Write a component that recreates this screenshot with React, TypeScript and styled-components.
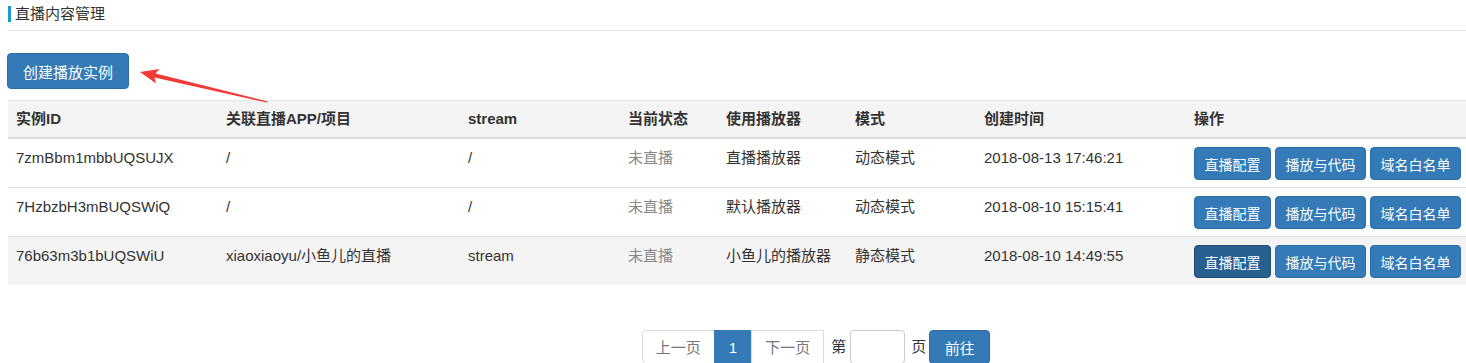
import React from 'react';
import styled, { createGlobalStyle } from 'styled-components';

const GlobalStyle = createGlobalStyle`
  html, body {
    margin: 0;
    padding: 0;
    overflow: hidden;
    background: #fff;
  }
  body {
    font-family: 'Liberation Sans', 'Noto Sans CJK SC', Arial, sans-serif;
    color: #333;
  }
`;

const palette = {
  primary: '#337ab7',
  primaryBorder: '#2e6da4',
  primaryDark: '#286090',
  primaryDarkBorder: '#204d74',
  text: '#333',
  muted: '#888',
  line: '#ddd',
  stripe: '#f4f4f4',
};

const PageDiv = styled.div`
  position: relative;
  width: 1466px;
`;

const ContentDiv = styled.div`
  padding-left: 8px;
`;

const TitleBar = styled.div`
  height: 25px;
  padding-top: 5px;
  margin-left: -1px;
  border-bottom: 1px solid #e8e8e8;
`;

const TitleText = styled.span`
  display: inline-block;
  margin-left: 1px;
  padding-left: 4px;
  border-left: 3px solid #1a9bd7;
  font-size: 15px;
  line-height: 16px;
`;

const CreateButton = styled.button`
  display: block;
  height: 36px;
  margin: 22px 0 11px -1px;
  padding: 0 15px;
  font-family: inherit;
  font-size: 15px;
  color: #fff;
  background: ${palette.primary};
  border: 1px solid ${palette.primaryBorder};
  border-radius: 4px;
  cursor: pointer;
`;

const Table = styled.table`
  width: 1458px;
  table-layout: fixed;
  border-collapse: collapse;
  font-size: 15px;
`;

const HeadRow = styled.tr`
  background: ${palette.stripe};
  border-top: 1px solid #e6e6e6;
  border-bottom: 2px solid ${palette.line};
`;

const Th = styled.th`
  padding: 7px 8px 7px;
  line-height: 22px;
  text-align: left;
  font-weight: bold;
  color: ${palette.text};
`;

const Row = styled.tr<{ hovered?: boolean }>`
  background: ${(props) => (props.hovered ? palette.stripe : '#fff')};
  border-top: 1px solid ${palette.line};
  &:first-child {
    border-top: none;
  }
`;

const Td = styled.td<{ muted?: boolean }>`
  padding: 8px 8px 7px;
  line-height: 22px;
  vertical-align: top;
  color: ${(props) => (props.muted ? palette.muted : palette.text)};
  white-space: nowrap;
`;

const ActionGroup = styled.div`
  display: flex;
  gap: 4px;
`;

const ActionButton = styled.button<{ active?: boolean }>`
  height: 33px;
  padding: 0 9.5px;
  font-family: inherit;
  font-size: 14px;
  color: #fff;
  background: ${(props) => (props.active ? palette.primaryDark : palette.primary)};
  border: 1px solid ${(props) => (props.active ? palette.primaryDarkBorder : palette.primaryBorder)};
  border-radius: 4px;
  cursor: pointer;
`;

const PagerRow = styled.div`
  display: grid;
  grid-template-columns: 1fr auto 1fr;
  align-items: start;
  margin-top: 45px;
`;

const PagerList = styled.ul`
  display: flex;
  margin: 0;
  padding: 0;
  list-style: none;
  grid-column: 2;
`;

const PageItem = styled.li<{ active?: boolean; first?: boolean }>`
  height: 34px;
  padding: 0 13px;
  line-height: 34px;
  font-size: 15px;
  color: ${(props) => (props.active ? '#fff' : '#777')};
  background: ${(props) => (props.active ? palette.primary : '#fff')};
  border: 1px solid ${(props) => (props.active ? palette.primary : palette.line)};
  margin-left: ${(props) => (props.first ? '0' : '-1px')};
  border-radius: ${(props) => (props.first ? '4px 0 0 4px' : '0')};
  box-sizing: border-box;
  cursor: pointer;
`;

const NumberItem = styled(PageItem)`
  padding: 0 14px;
`;

const JumpDiv = styled.div`
  display: flex;
  align-items: flex-start;
  grid-column: 3;
  font-size: 15px;
`;

const JumpLabel = styled.span`
  line-height: 34px;
  margin: 0 4px 0 7px;
`;

const PageLabel = styled.span`
  line-height: 34px;
  margin: 0 3px 0 6px;
`;

const PageInput = styled.input`
  width: 55px;
  height: 34px;
  box-sizing: border-box;
  border: 1px solid #ccc;
  border-radius: 4px;
  padding: 0 6px;
`;

const GoButton = styled.button`
  height: 34px;
  padding: 0 14.5px;
  font-family: inherit;
  font-size: 15px;
  color: #fff;
  background: ${palette.primary};
  border: 1px solid ${palette.primaryBorder};
  border-radius: 4px;
  cursor: pointer;
`;

const ArrowSvg = styled.svg`
  position: absolute;
  left: 0;
  top: 0;
  pointer-events: none;
`;

interface IInstance {
  id: string;
  app: string;
  stream: string;
  status: string;
  player: string;
  mode: string;
  createdAt: string;
}

const instances: IInstance[] = [
  { id: '7zmBbm1mbbUQSUJX', app: '/', stream: '/', status: '未直播', player: '直播播放器', mode: '动态模式', createdAt: '2018-08-13 17:46:21' },
  { id: '7HzbzbH3mBUQSWiQ', app: '/', stream: '/', status: '未直播', player: '默认播放器', mode: '动态模式', createdAt: '2018-08-10 15:15:41' },
  { id: '76b63m3b1bUQSWiU', app: 'xiaoxiaoyu/小鱼儿的直播', stream: 'stream', status: '未直播', player: '小鱼儿的播放器', mode: '静态模式', createdAt: '2018-08-10 14:49:55' },
];

const columns = [
  { title: '实例ID', width: 210 },
  { title: '关联直播APP/项目', width: 242 },
  { title: 'stream', width: 160 },
  { title: '当前状态', width: 98 },
  { title: '使用播放器', width: 129 },
  { title: '模式', width: 129 },
  { title: '创建时间', width: 210 },
  { title: '操作', width: 280 },
];

const App = () => {
  return (
    <PageDiv>
      <GlobalStyle />
      <ContentDiv>
        <TitleBar>
          <TitleText>直播内容管理</TitleText>
        </TitleBar>
        <CreateButton>创建播放实例</CreateButton>
        <Table>
          <colgroup>
            {columns.map((column) => (
              <col key={column.title} style={{ width: column.width }} />
            ))}
          </colgroup>
          <thead>
            <HeadRow>
              {columns.map((column) => (
                <Th key={column.title}>{column.title}</Th>
              ))}
            </HeadRow>
          </thead>
          <tbody>
            {instances.map((item, index) => (
              <Row key={item.id} hovered={index === 2}>
                <Td>{item.id}</Td>
                <Td>{item.app}</Td>
                <Td>{item.stream}</Td>
                <Td muted>{item.status}</Td>
                <Td>{item.player}</Td>
                <Td>{item.mode}</Td>
                <Td>{item.createdAt}</Td>
                <Td>
                  <ActionGroup>
                    <ActionButton active={index === 2}>直播配置</ActionButton>
                    <ActionButton>播放与代码</ActionButton>
                    <ActionButton>域名白名单</ActionButton>
                  </ActionGroup>
                </Td>
              </Row>
            ))}
          </tbody>
        </Table>
      </ContentDiv>

      <PagerRow>
        <PagerList>
          <PageItem first>上一页</PageItem>
          <NumberItem active>1</NumberItem>
          <PageItem>下一页</PageItem>
        </PagerList>
        <JumpDiv>
          <JumpLabel>第</JumpLabel>
          <PageInput />
          <PageLabel>页</PageLabel>
          <GoButton>前往</GoButton>
        </JumpDiv>
      </PagerRow>

      {/* annotation arrow pointing at the create button */}
      <ArrowSvg width="300" height="110" viewBox="0 0 300 110">
        <polygon
          points="140,72 159.5,69 155.5,73.6 267.5,101.4 267,102.6 154.5,77.4 156,83.5"
          fill="#f23b36"
        />
      </ArrowSvg>
    </PageDiv>
  );
};

export default App;
